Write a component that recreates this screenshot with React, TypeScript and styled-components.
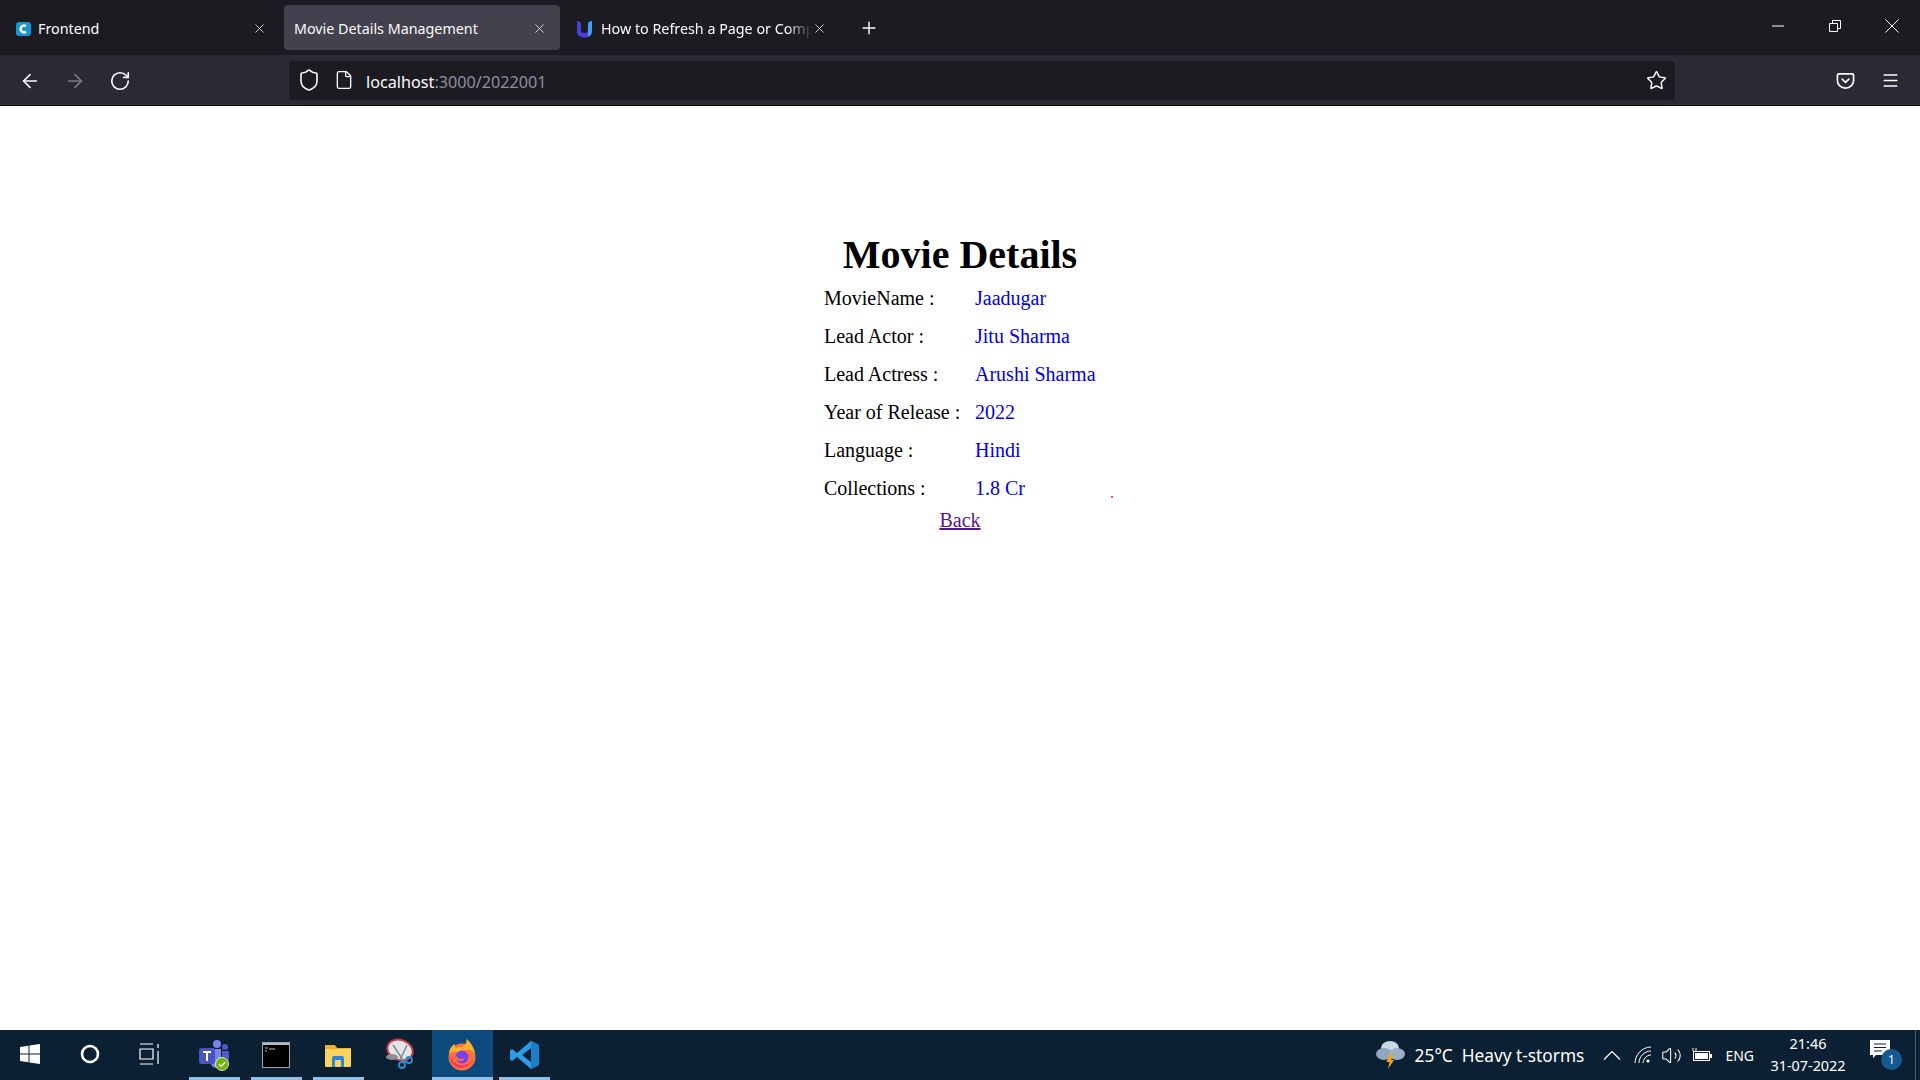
import React from "react";
import styled, { createGlobalStyle } from "styled-components";
import { ArrowLeft, ArrowRight, RotateCw, Shield, File, Star, Menu, X, Plus, Volume2 } from "lucide-react";

const Global = createGlobalStyle`
  html, body { margin: 0; padding: 0; background: #fff; }
  #root { height: 1080px; overflow: hidden; }
`;

const uiFont = `"Noto Sans", "Open Sans", sans-serif`;

const Shell = styled.div`
  display: flex;
  flex-direction: column;
  width: 1920px;
  height: 1080px;
  font-family: ${uiFont};
`;

const TabStrip = styled.div`
  display: flex;
  align-items: flex-start;
  height: 55px;
  padding-top: 5px;
  box-sizing: border-box;
  background: #1c1b22;
  color: #fbfbfe;
  flex: none;
`;

const Tab = styled.div<{ $active?: boolean; $w: number; $pad: number }>`
  display: flex;
  align-items: center;
  width: ${(p) => p.$w}px;
  height: 45px;
  box-sizing: border-box;
  padding: 2px 13px 0 ${(p) => p.$pad}px;
  margin-right: 4px;
  border-radius: 4px;
  background: ${(p) => (p.$active ? "#42414d" : "transparent")};
  font-size: 14.3px;
  white-space: nowrap;
`;

const TabIcon = styled.svg<{ $gap: number }>`
  width: 17px;
  height: 18px;
  margin-right: ${(p) => p.$gap}px;
  flex: none;
`;

const TabTitle = styled.span<{ $fade?: boolean }>`
  flex: 1;
  min-width: 0;
  ${(p) =>
    p.$fade
      ? "-webkit-mask-image: linear-gradient(to right, #000 88%, transparent 100%); mask-image: linear-gradient(to right, #000 88%, transparent 100%);"
      : ""}
`;

const TabClose = styled(X)`
  width: 15px;
  height: 15px;
  stroke-width: 1.5;
  flex: none;
  color: #d8d8dc;
`;

const NewTab = styled(Plus)`
  width: 20px;
  height: 20px;
  margin: 13px 0 0 15px;
  stroke-width: 1.7;
`;

const WindowControls = styled.div`
  display: flex;
  align-items: center;
  height: 45px;
  margin-left: auto;
  margin-top: -2px;
  padding-right: 21px;
  gap: 43px;
`;

const WindowGlyph = styled.svg`
  width: 14px;
  height: 14px;
  color: #fbfbfe;
`;

const NavBar = styled.div`
  display: flex;
  align-items: center;
  height: 51px;
  box-sizing: border-box;
  padding-left: 19px;
  padding-right: 20px;
  background: #2b2a33;
  border-bottom: 1px solid #0c0c0d;
  color: #fbfbfe;
  flex: none;
`;

const NavButton = styled.div<{ $dim?: boolean; $gap?: number }>`
  display: flex;
  width: 20px;
  height: 20px;
  margin-right: ${(p) => p.$gap ?? 25}px;
  color: ${(p) => (p.$dim ? "#7c7b83" : "#fbfbfe")};
  svg { width: 22px; height: 22px; stroke-width: 1.8; flex: none; }
`;

const UrlBar = styled.div`
  display: flex;
  align-items: center;
  width: 1386px;
  height: 39px;
  margin-left: 160px;
  padding: 0 8px 0 8px;
  box-sizing: border-box;
  border-radius: 4px;
  background: #1c1b22;
  flex: none;
`;

const UrlIcon = styled.div<{ $gap: number; $size: number }>`
  display: flex;
  margin-right: ${(p) => p.$gap}px;
  svg { width: ${(p) => p.$size}px; height: ${(p) => p.$size}px; stroke-width: 1.6; }
`;

const UrlText = styled.div`
  font-size: 16.2px;
  padding-top: 3px;
`;

const UrlRest = styled.span`
  color: #8f8f9d;
`;

const UrlStar = styled(Star)`
  width: 21px;
  height: 21px;
  margin-left: auto;
  stroke-width: 1.7;
`;

const NavRight = styled.div`
  display: flex;
  align-items: center;
  margin-left: auto;
  gap: 26px;
`;

const Pocket = styled.svg`
  width: 19px;
  height: 19px;
`;

const HamburgerIcon = styled(Menu)`
  width: 19px;
  height: 19px;
  stroke-width: 1.8;
`;

const Page = styled.main`
  flex: 1;
  display: flex;
  flex-direction: column;
  align-items: center;
  background: #fff;
  font-family: "Liberation Serif", "Times New Roman", serif;
  padding-top: 126px;
  color: #000;
`;

const Title = styled.h1`
  margin: 0 0 1px;
  font-size: 40px;
  line-height: 46px;
  font-weight: 700;
`;

const Details = styled.div`
  position: relative;
  display: grid;
  grid-template-columns: 151px 121px;
  grid-auto-rows: 38px;
  align-items: center;
  font-size: 20px;
`;

const Label = styled.span`
  white-space: nowrap;
`;

const Value = styled.span`
  color: #0000ee;
  white-space: nowrap;
`;

const RedDot = styled.span`
  position: absolute;
  left: 287px;
  top: 217px;
  width: 2px;
  height: 2px;
  background: #d81a2a;
  border-radius: 50%;
`;

const BackLink = styled.a`
  font-size: 20px;
  line-height: 24px;
  margin-top: 1px;
  color: #551a8b;
  text-decoration: underline;
`;

const TaskBar = styled.footer`
  display: flex;
  align-items: stretch;
  height: 50px;
  background: #0b2032;
  color: #fff;
  flex: none;
`;

const Pinned = styled.div<{ $w: number; $running?: boolean; $active?: boolean; $mr?: number; $nudge?: number }>`
  display: flex;
  align-items: center;
  justify-content: center;
  box-sizing: border-box;
  width: ${(p) => p.$w}px;
  margin-right: ${(p) => p.$mr ?? 0}px;
  background: ${(p) => (p.$active ? "#0c4a7d" : "transparent")};
  border-bottom: 3px solid ${(p) => (p.$running ? "#93c0e6" : "transparent")};
  padding-top: ${(p) => (p.$running ? 3 : 0)}px;
  padding-right: ${(p) => p.$nudge ?? 0}px;
`;

const Tray = styled.div`
  display: flex;
  align-items: center;
  margin-left: auto;
  font-size: 16px;
`;

const Weather = styled.span`
  margin: 0 0 0 9px;
  font-size: 17.3px;
  white-space: nowrap;
`;

const TrayGlyph = styled.div<{ $ml: number }>`
  display: flex;
  margin-left: ${(p) => p.$ml}px;
  color: #fff;
`;

const Lang = styled.span`
  font-size: 14px;
  margin-left: 13px;
`;

const Clock = styled.div`
  width: 86px;
  margin-left: 11px;
  margin-top: -1px;
  text-align: center;
  font-size: 14.4px;
  line-height: 22px;
`;

const Notify = styled.div`
  position: relative;
  width: 32px;
  height: 30px;
  margin-left: 19px;
  margin-right: 13px;
`;

const Badge = styled.span`
  position: absolute;
  right: 0;
  bottom: 0;
  width: 21px;
  height: 21px;
  border-radius: 50%;
  background: #14598f;
  font-size: 12px;
  line-height: 21px;
  text-align: center;
`;

const Divider = styled.div`
  align-self: stretch;
  width: 1px;
  background: #4b5a68;
  margin-right: 4px;
`;

export default function App() {
  const rows: [string, string][] = [
    ["MovieName :", "Jaadugar"],
    ["Lead Actor :", "Jitu Sharma"],
    ["Lead Actress :", "Arushi Sharma"],
    ["Year of Release :", "2022"],
    ["Language :", "Hindi"],
    ["Collections :", "1.8 Cr"],
  ];
  return (
    <Shell>
      <Global />
      <TabStrip>
        <Tab $w={280} $pad={15}>
          <TabIcon $gap={6} viewBox="0 0 17 18">
            <rect x="1" y="2" width="15" height="14" rx="3" fill="#1496d6" />
            <path d="M11 6.2a3.4 3.4 0 1 0 0 5.6" fill="none" stroke="#fff" strokeWidth="2.4" />
          </TabIcon>
          <TabTitle>Frontend</TabTitle>
          <TabClose />
        </Tab>
        <Tab $active $w={276} $pad={10}>
          <TabTitle>Movie Details Management</TabTitle>
          <TabClose />
        </Tab>
        <Tab $w={276} $pad={12}>
          <TabIcon $gap={8} viewBox="0 0 17 18">
            <path d="M1 1c2 0 4 1 4 3v6c0 2 1.500 3 3.500 3s3.500-1 3.500-3V4c0-2 2-3 4-3v10c0 4-3 6.500-7.500 6.500S1 15 1 11z" fill="#4b3fdc" />
            <path d="M12 4c0-2 2-3 4-3v10c0 3-1.500 5-4 6z" fill="#3ea0f0" />
          </TabIcon>
          <TabTitle $fade>How to Refresh a Page or Comp</TabTitle>
          <TabClose />
        </Tab>
        <NewTab />
        <WindowControls>
          <WindowGlyph viewBox="0 0 14 14">
            <path d="M1 7h12" stroke="currentColor" strokeWidth="1" />
          </WindowGlyph>
          <WindowGlyph viewBox="0 0 14 14">
            <path d="M1.500 4.500h8v8h-8zM4.500 4.500v-3h8v8h-3" fill="none" stroke="currentColor" strokeWidth="1" />
          </WindowGlyph>
          <WindowGlyph viewBox="0 0 14 14">
            <path d="M.5.5l13 13M13.500.5l-13 13" stroke="currentColor" strokeWidth="1" />
          </WindowGlyph>
        </WindowControls>
      </TabStrip>
      <NavBar>
        <NavButton><ArrowLeft /></NavButton>
        <NavButton $dim><ArrowRight /></NavButton>
        <NavButton $gap={0}><RotateCw /></NavButton>
        <UrlBar>
          <UrlIcon $gap={13} $size={24}><Shield /></UrlIcon>
          <UrlIcon $gap={12} $size={20}><File /></UrlIcon>
          <UrlText>
            localhost<UrlRest>:3000/2022001</UrlRest>
          </UrlText>
          <UrlStar />
        </UrlBar>
        <NavRight>
          <Pocket viewBox="0 0 20 20">
            <path d="M3 3h14a1.500 1.500 0 0 1 1.500 1.500V10a8.500 8 0 0 1-17 0V4.500A1.500 1.500 0 0 1 3 3z" fill="none" stroke="#fbfbfe" strokeWidth="1.800" />
            <path d="M6.500 8.500l3.500 3.500 3.500-3.500" fill="none" stroke="#fbfbfe" strokeWidth="1.800" strokeLinecap="round" />
          </Pocket>
          <HamburgerIcon />
        </NavRight>
      </NavBar>
      <Page>
        <Title>Movie Details</Title>
        <Details>
          {rows.map(([k, v]) => (
            <React.Fragment key={k}>
              <Label>{k}</Label>
              <Value>{v}</Value>
            </React.Fragment>
          ))}
          <RedDot />
        </Details>
        <BackLink href="#">Back</BackLink>
      </Page>
      <TaskBar>
        <Pinned $w={60}>
          <svg width="20" height="20" viewBox="0 0 20 20">
            <path d="M0 3l8.500-1.200V9.500H0zM9.500 1.600L20 0v9.500H9.500zM0 10.500h8.500v7.700L0 17zM9.500 10.500H20V20L9.500 18.400z" fill="#fff" />
          </svg>
        </Pinned>
        <Pinned $w={60}>
          <svg width="20" height="20" viewBox="0 0 20 20">
            <circle cx="10" cy="10" r="8" fill="none" stroke="#fff" strokeWidth="2.600" />
          </svg>
        </Pinned>
        <Pinned $w={60} $mr={9}>
          <svg width="22" height="22" viewBox="0 0 22 22">
            <path d="M1 1h13M1 21h13M1 6h13v10H1zM19 1v4M19 8v13" fill="none" stroke="#fff" strokeWidth="1.200" />
          </svg>
        </Pinned>
        <Pinned $w={51} $running $mr={11} $nudge={2}>
          <svg width="34" height="32" viewBox="0 0 34 32">
            <circle cx="20" cy="5" r="4" fill="#7b83eb" />
            <circle cx="28" cy="8" r="3" fill="#5059c9" />
            <path d="M14 10h10v14a5 5 0 0 1-10 0z" fill="#7b83eb" />
            <path d="M25 12h7v9a4 4 0 0 1-7 2z" fill="#5059c9" />
            <rect x="2" y="9" width="16" height="16" rx="2" fill="#4b53bc" />
            <path d="M6 13h8M10 13v9" stroke="#fff" strokeWidth="2" fill="none" />
            <circle cx="25" cy="25" r="6.500" fill="#6bb700" stroke="#fff" strokeWidth="0.800" />
            <path d="M22 25l2.200 2.200 4-4" stroke="#fff" strokeWidth="1.500" fill="none" />
          </svg>
        </Pinned>
        <Pinned $w={51} $running $mr={11} $nudge={2}>
          <svg width="28" height="26" viewBox="0 0 28 26">
            <rect x="0.500" y="0.500" width="27" height="25" fill="#000" stroke="#9aa0a6" />
            <rect x="1" y="1" width="26" height="2" fill="#b8bcc0" />
            <path d="M3 6h3M3 9h2M7 7h6" stroke="#c8c8c8" strokeWidth="1" />
          </svg>
        </Pinned>
        <Pinned $w={51} $running $mr={21} $nudge={2}>
          <svg width="28" height="26" viewBox="0 0 28 26">
            <path d="M1 3h10l2 3h14v4H1z" fill="#e8b32c" />
            <rect x="1" y="7" width="26" height="18" rx="1" fill="#ffd45e" />
            <path d="M8 25v-9a2 2 0 0 1 2-2h8a2 2 0 0 1 2 2v9h-3v-7h-6v7z" fill="#2b88d8" />
          </svg>
        </Pinned>
        <Pinned $w={30} $mr={17}>
          <svg width="30" height="32" viewBox="0 0 30 32">
            <ellipse cx="15" cy="12" rx="13" ry="10" transform="rotate(20 15 12)" fill="#e6e6e6" stroke="#c5394a" strokeWidth="2" />
            <path d="M8 7l12 18M22 7L15 22" stroke="#7d8b95" strokeWidth="1.500" />
            <ellipse cx="7" cy="19" rx="6" ry="3" fill="#8a8f94" />
            <circle cx="17" cy="27" r="3" fill="none" stroke="#2d8fd6" strokeWidth="1.800" />
            <circle cx="24" cy="22" r="3" fill="none" stroke="#2d8fd6" strokeWidth="1.800" />
          </svg>
        </Pinned>
        <Pinned $w={61} $active $running $mr={6} $nudge={2}>
          <svg width="30" height="32" viewBox="0 0 30 32">
            <circle cx="15" cy="18" r="13.500" fill="#ff7139" />
            <path d="M2 14C3 8 6 6 8 5c-.5 2 0 3 1 4 2-1 4-1 6-1C18 6 20 4 19.500 0c4 3 8 9 8.500 15-2-3-5-5-8-4z" fill="#ffb02e" />
            <path d="M2 16c2 6 8 11 15 10 6-1 10-5 11-10-2 8-8 13-14 13S3 24 2 16z" fill="#e31587" opacity="0.600" />
            <circle cx="15" cy="18" r="6.500" fill="#7542e5" />
            <path d="M9 16c1 4 5 5 9 3-2 4-7 4-9 1z" fill="#ff7139" />
          </svg>
        </Pinned>
        <Pinned $w={51} $running>
          <svg width="30" height="30" viewBox="0 0 30 30">
            <path d="M21 1l8 4v20l-8 4L7 17 2 21l-2-1.500V10.500L2 9l5 4z" fill="#2c9ce8" />
            <path d="M21 1l8 4v20l-8 4z" fill="#1a7fc9" />
            <path d="M21 8v14l-9-7z" fill="#0b2032" />
          </svg>
        </Pinned>
        <Tray>
          <svg width="30" height="32" viewBox="0 0 30 32">
            <ellipse cx="14" cy="9" rx="9" ry="7" fill="#c9d6e3" />
            <ellipse cx="8" cy="15" rx="8" ry="6" fill="#8fa6bd" />
            <ellipse cx="21" cy="15" rx="8" ry="6" fill="#9db1c6" />
            <path d="M13 16h5l-3 5h3l-6 9 1.500-7h-3z" fill="#f2a31c" />
          </svg>
          <Weather>25°C&nbsp;&nbsp;Heavy t-storms</Weather>
          <TrayGlyph $ml={19}>
            <svg width="18" height="10" viewBox="0 0 18 10">
              <path d="M1 9.500L9 1.500l8 8" fill="none" stroke="#fff" strokeWidth="1.200" />
            </svg>
          </TrayGlyph>
          <TrayGlyph $ml={13}>
            <svg width="18" height="18" viewBox="0 0 18 18">
              <path d="M1 17C1 9 8 1 17 1M5 17c0-6 5-12 12-12M9 17c0-3 3-8 8-8" fill="none" stroke="#fff" strokeWidth="1" />
              <circle cx="14" cy="15" r="1.600" fill="#fff" />
            </svg>
          </TrayGlyph>
          <TrayGlyph $ml={9}><Volume2 size={21} strokeWidth={1.2} /></TrayGlyph>
          <TrayGlyph $ml={9}>
            <svg width="21" height="14" viewBox="0 0 21 14">
              <rect x="2.500" y="3.500" width="16" height="9" fill="none" stroke="#fff" />
              <rect x="4" y="5" width="13" height="6" fill="#fff" />
              <rect x="19" y="6" width="2" height="4" fill="#fff" />
              <path d="M2 0v3M5 0v3" stroke="#fff" />
            </svg>
          </TrayGlyph>
          <Lang>ENG</Lang>
          <Clock>
            21:46
            <br />
            31-07-2022
          </Clock>
          <Notify>
            <svg width="20" height="18" viewBox="0 0 20 18">
              <path d="M0 0h20v15H6l-3 3v-3H0z" fill="#fff" />
              <path d="M4 4h12M4 7.500h12M4 11h8" stroke="#0b2032" strokeWidth="1.200" />
            </svg>
            <Badge>1</Badge>
          </Notify>
          <Divider />
        </Tray>
      </TaskBar>
    </Shell>
  );
}
